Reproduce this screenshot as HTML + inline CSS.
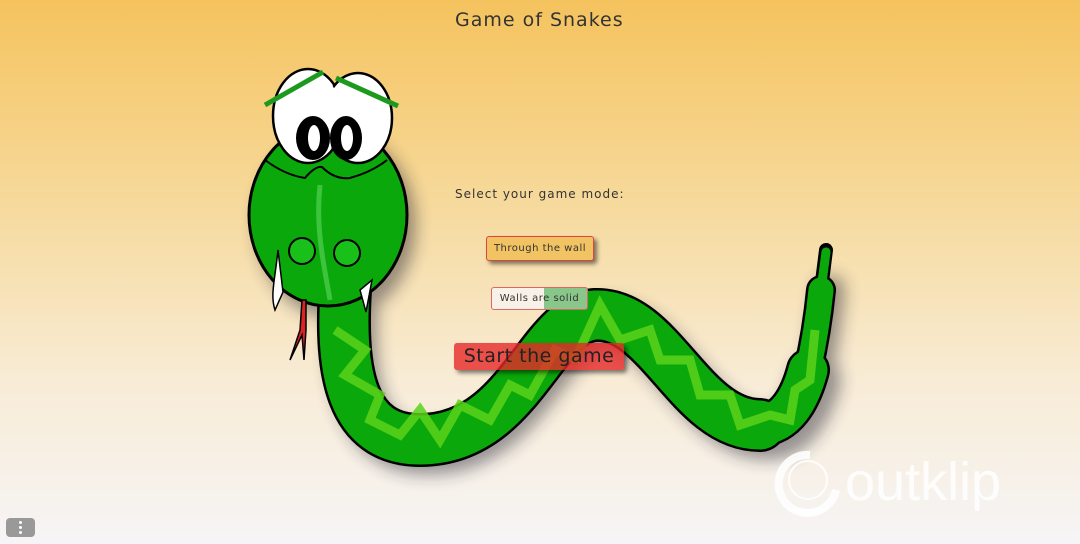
<!DOCTYPE html>
<html><head><meta charset="utf-8"><style>
html,body{margin:0;padding:0}
body{width:1080px;height:544px;overflow:hidden;position:relative;background:linear-gradient(to bottom,#f5c35e 0%,#f6d898 35%,#f8ecd6 70%,#f6f4f6 100%);font-family:"DejaVu Sans","Liberation Sans",sans-serif;color:#333}
.t{position:absolute;white-space:nowrap}
.btn{position:absolute;box-shadow:3px 3px 4px rgba(0,0,0,.5);border-radius:3px;font-size:10px;letter-spacing:.5px}
</style></head><body>
<div class="t" style="left:455px;top:9px;font-size:19px;letter-spacing:1px;color:#333">Game of Snakes</div>
<svg width="1080" height="544" style="position:absolute;left:0;top:0">
<defs><filter id="sh" x="-20%" y="-20%" width="140%" height="140%"><feGaussianBlur stdDeviation="8"/></filter></defs>
<g opacity=".45" filter="url(#sh)" transform="translate(8,10)" fill="none" stroke="#223" stroke-linecap="round">
<path d="M345,290 C340,370 350,440 420,440 C520,440 540,318 595,315 C660,312 690,425 760,425 C785,425 800,400 808,370" stroke-width="50"/>
<path d="M808,370 C815,340 820,300 822,280" stroke-width="30"/>
<ellipse cx="328" cy="215" rx="80" ry="94" fill="#223" stroke="none"/>
</g>
<g fill="none" stroke="#000" stroke-linecap="round">
<path d="M345,290 C340,370 350,440 420,440 C520,440 540,318 595,315 C660,312 690,425 760,425" stroke-width="54"/>
<path d="M760,425 C785,425 800,400 808,370" stroke-width="44"/>
<path d="M808,370 C815,340 819,310 821,290" stroke-width="30"/>
<path d="M821,290 L826,250" stroke-width="14"/>
</g>
<g fill="none" stroke="#0aa80a" stroke-linecap="round">
<path d="M345,290 C340,370 350,440 420,440 C520,440 540,318 595,315 C660,312 690,425 760,425" stroke-width="49"/>
<path d="M760,425 C785,425 800,400 808,370" stroke-width="39"/>
<path d="M808,370 C815,340 819,310 821,290" stroke-width="25"/>
<path d="M821,290 L826,252" stroke-width="9"/>
</g>
<path d="M335,330 L365,350 L345,375 L380,395 L370,420 L400,435 L420,410 L440,440 L460,405 L490,420 L510,385 L530,395 L555,350 L575,360 L600,305 L620,340 L650,330 L660,360 L690,360 L700,395 L730,395 L740,425 L770,415 L790,420 L795,390 L810,380 L815,330" fill="none" stroke="#5ad21a" stroke-width="9" opacity=".85" stroke-linejoin="miter"/>
<ellipse cx="328" cy="215" rx="79" ry="91" fill="#0aa80a" stroke="#000" stroke-width="3"/>
<path d="M320,185 C315,230 325,270 330,300" stroke="#3cc43c" stroke-width="5" fill="none"/>
<path d="M278,250 C275,280 270,295 275,310 L283,292Z" fill="#fff" stroke="#000" stroke-width="1.5"/>
<path d="M372,280 L366,312 L360,290Z" fill="#fff" stroke="#000" stroke-width="1.5"/>
<path d="M302,300 L300,330 L290,360 L302,335 L304,360 L306,330 L306,300Z" fill="#d22" stroke="#000" stroke-width="1.5"/>
<path d="M265,160 Q285,175 305,178 Q315,166 322,167 Q335,180 350,178 Q372,172 387,160" fill="none" stroke="#000" stroke-width="2"/>
<ellipse cx="308" cy="116" rx="35" ry="47" fill="#fff" stroke="#000" stroke-width="2.5"/>
<ellipse cx="358" cy="118" rx="34" ry="45" fill="#fff" stroke="#000" stroke-width="2.5"/>
<ellipse cx="308" cy="116" rx="33" ry="45" fill="#fff"/>
<ellipse cx="313" cy="138" rx="17" ry="22" fill="#000"/>
<ellipse cx="314" cy="138" rx="6" ry="13" fill="#fff"/>
<ellipse cx="346" cy="138" rx="16" ry="22" fill="#000"/>
<ellipse cx="347" cy="138" rx="6" ry="13" fill="#fff"/>
<path d="M265,105 L323,72 M336,78 L398,106" stroke="#1d9a1d" stroke-width="5"/>
<circle cx="302" cy="251" r="13" fill="#19c019" stroke="#000" stroke-width="2"/>
<circle cx="347" cy="253" r="13" fill="#19c019" stroke="#000" stroke-width="2"/>
<g opacity=".9" fill="none" stroke="#fff">
<path d="M810,455 A29,29 0 1 0 836,490" stroke-width="8"/>
<circle cx="808" cy="480" r="19" stroke-width="2"/>
</g>
<text x="845" y="500" font-family="Liberation Sans,sans-serif" font-size="54" fill="#fff" opacity=".9">outklip</text>
</svg>
<div class="t" style="left:455px;top:187px;font-size:12px;letter-spacing:1px">Select your game mode:</div>
<div class="btn" style="left:486px;top:236px;width:106px;height:23px;background:#f2c363;border:1px solid #d44;line-height:23px;text-align:center">Through the wall</div>
<div class="btn" style="left:491px;top:287px;width:95px;height:21px;background:linear-gradient(to right,#f7f1e7 55%,#88c68a 55%);border:1px solid #d66;line-height:21px;text-align:center;box-shadow:none">Walls are solid</div>
<div class="btn" style="left:454px;top:343px;width:170px;height:27px;background:rgba(230,40,40,.8);line-height:27px;text-align:center;font-size:19px;color:#222">Start the game</div>
<div style="position:absolute;left:6px;top:518px;width:29px;height:19px;background:#999;border-radius:4px"></div>
<div style="position:absolute;left:19px;top:521px;width:3px;height:3px;background:#fff;border-radius:50%;box-shadow:0 5px #fff,0 10px #fff"></div>
</body></html>
